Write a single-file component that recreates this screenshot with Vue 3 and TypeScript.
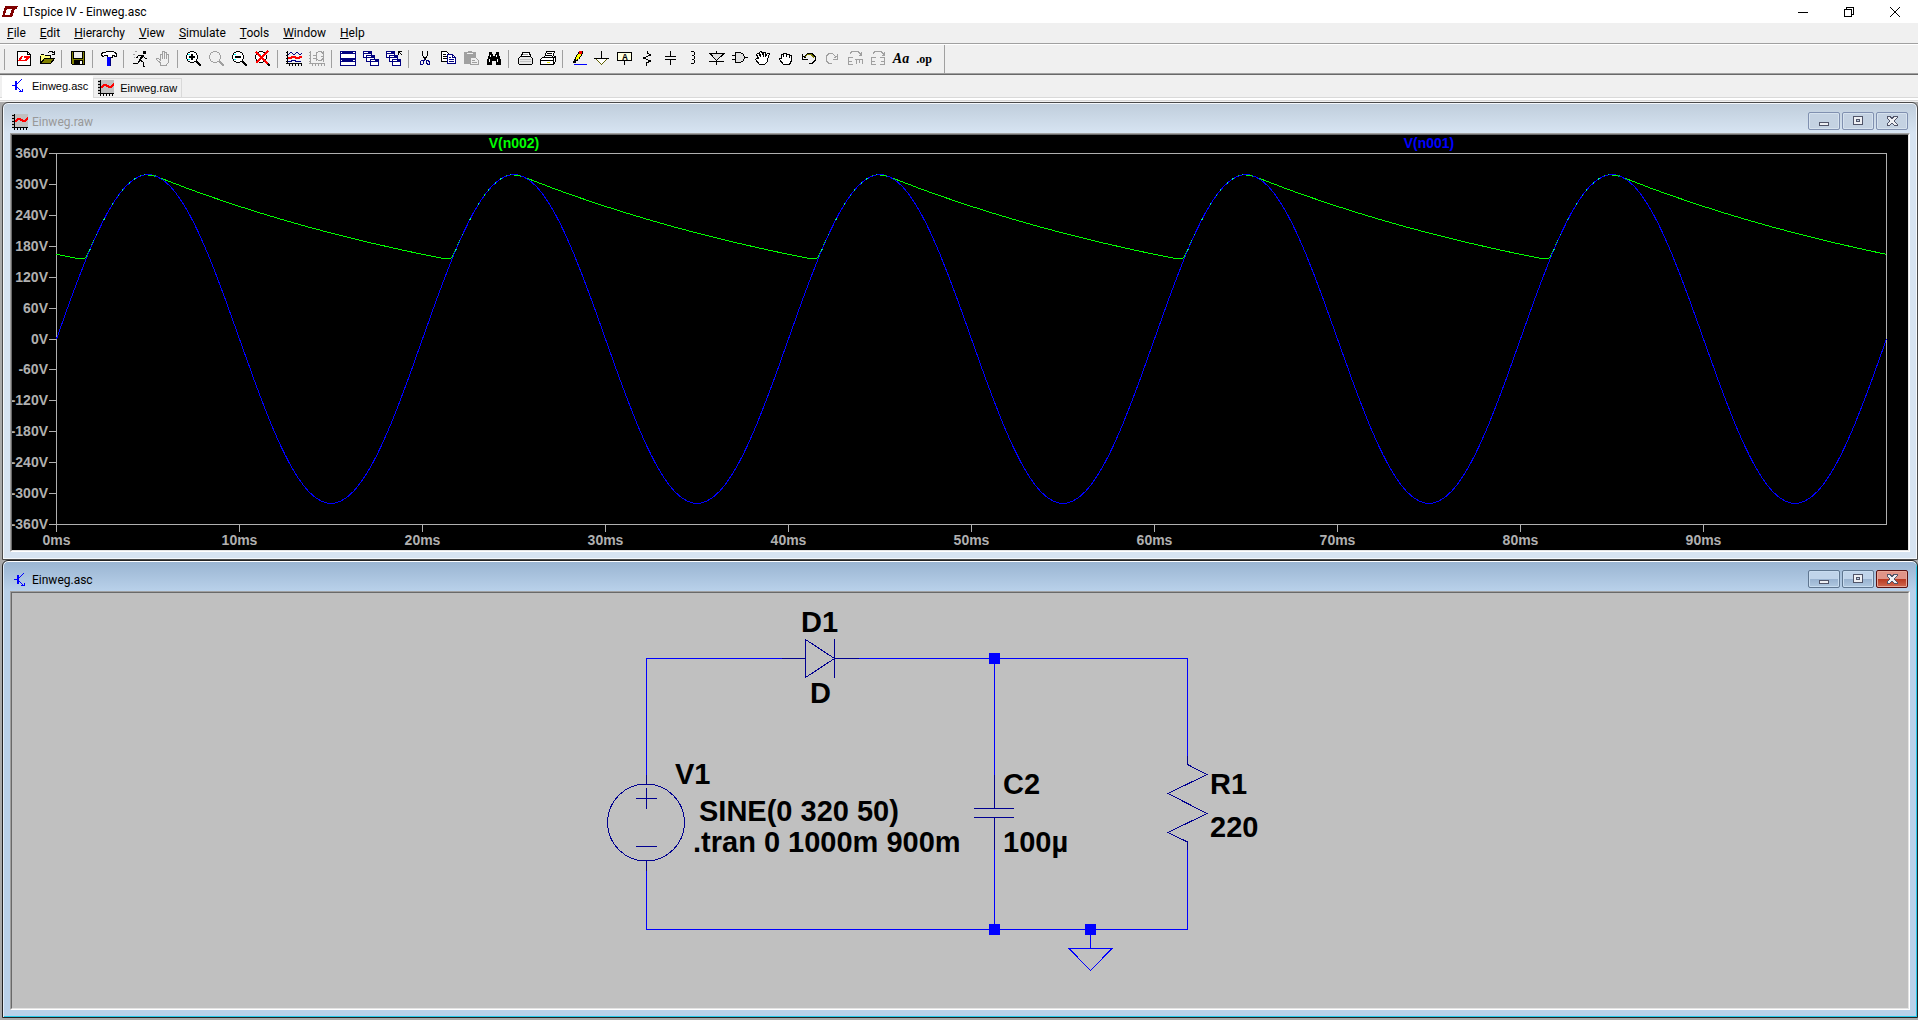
<script setup lang="ts">
import { computed, onBeforeUnmount, onMounted, ref } from 'vue'

interface MenuEntry { key: string; rest: string }
const menus: MenuEntry[] = ['File', 'Edit', 'Hierarchy', 'View', 'Simulate', 'Tools', 'Window', 'Help'].map(
  (m) => ({ key: m[0], rest: m.slice(1) }),
)

interface Shape { d: string; s?: string; f?: string; w?: number }
interface Tool { name: string; shapes: Shape[]; text?: string; cls?: string }

const K = '#000'
const N = '#000080'
const G = '#a0a0a0'
const lensShapes = (c: string): Shape[] => [
  { d: 'M4 1h4v1h2v2h1v4h-1v2H8v1H4v-1H2V8H1V4h1V2h2z', s: 'none', f: c === K ? '#fff' : 'none' },
  { d: 'M4 .5h4M2 1.5h2M8 1.5h2M1.5 2v2M10.5 2v2M.5 4v4M11.5 4v4M1.5 8v2M10.5 8v2M2 10.5h2M8 10.5h2M4 11.5h4', s: c },
  { d: 'M10 10l5 5', s: c, w: 2 },
]
const cascade = (x: number, y: number): Shape[] => [
  { d: `M${x} ${y}h9v7h-9z`, s: 'none', f: N },
  { d: `M${x + 1} ${y + 3}h7v3h-7z`, s: 'none', f: '#fff' },
  { d: `M${x + 1} ${y + 1.5}h4`, s: '#fff' },
]
const graphAxes = 'M1.5 0v13M0 12.5h16M0 1.5h1M0 4.5h1M0 7.5h1M0 10.5h1M3.5 13v2M6.5 13v2M9.5 13v2M12.5 13v2M15.5 13v2'

const groups: Tool[][] = [
  [
    { name: 'New schematic', shapes: [
      { d: 'M1.5 .5h10l3 3v11h-13z', s: K, f: '#fff' }, { d: 'M11.5 .5v3h3', s: K },
      { d: 'M5 5h2L5 9h3v1H2zM8 5h6v2h-1l-2 3H8l2-3H8z', s: 'none', f: '#f00' } ] },
    { name: 'Open', shapes: [
      { d: 'M1 13V4h4l1 1h6v2H5z', s: 'none', f: '#ffff80' },
      { d: 'M1 12.5V4.5M2 3.5h3M5.5 4.5h6V7', s: K },
      { d: 'M1.5 12.5L5.5 7.5h10l-4 5z', s: K, f: '#808000' },
      { d: 'M8.5 2.5l2-2h3l1 2M15.5 0v3.5h-3', s: K } ] },
  ],
  [{ name: 'Save', shapes: [
      { d: 'M1.5 .5h13v13H2.500l-1-1z', s: K, f: '#808000' },
      { d: 'M4 1h8v6H4z', s: 'none', f: '#efefef' }, { d: 'M3.5 0v7.5h9V0', s: K },
      { d: 'M4 9h9v5H4z', s: 'none', f: K }, { d: 'M10 10h2v3h-2z', s: 'none', f: '#fff' } ] }],
  [{ name: 'Control panel', shapes: [
      { d: 'M.5 4.5v-2l2-1h2l1-1h6l3 1l1 2v2h-1l-2-1h-1v2h-5v-2h-3l-1 1z', s: K, f: '#fff' },
      { d: 'M6 6h4v9H6z', s: 'none', f: '#00f' }, { d: 'M9.5 6v9', s: N } ] }],
  [
    { name: 'Run', shapes: [
      { d: 'M11 0h3v3h-3z', s: 'none', f: K }, { d: 'M11 4L8 9', s: K, w: 2 },
      { d: 'M10 4.5H6.5L4.5 7M11 5l2 2h2M8 9l3 2v4h2M8 9l-2 3H1', s: K },
      { d: 'M1 3.5h2M3 .5h2M2 6.5h1', s: G } ] },
    { name: 'Halt', shapes: [{ d: 'M5.5 14v-2L1.5 8.5V7.5h2l2 2V3.5h2V8V.5h2V8V1.5h2V8V3.5h2V11l-2 3z', s: G }] },
  ],
  [
    { name: 'Zoom in', shapes: [...lensShapes(K), { d: 'M2 3.5h2M2 8.5h2', s: '#0ff' }, { d: 'M3 6h6M6 3v6', s: K, w: 2 }] },
    { name: 'Pan', shapes: lensShapes(G) },
    { name: 'Zoom out', shapes: [...lensShapes(K), { d: 'M2 3.5h2M2 8.5h2', s: '#0ff' }, { d: 'M3 6h6', s: K, w: 2 }] },
    { name: 'Zoom to fit', shapes: [...lensShapes(K), { d: 'M3 3.5h3M7 8.5h2', s: '#0ff' }, { d: 'M1 1l12 12M13 0L1 12', s: '#f00', w: 2 }] },
  ],
  [
    { name: 'Autorange', shapes: [
      { d: graphAxes, s: K }, { d: 'M2 4l3-3l3 3l3-3l3 3l2-2', s: N },
      { d: 'M2 7h3l1-1h3l1 1h3l1-1h2', s: '#f00', w: 2 }, { d: 'M2 10.5h3l1-1h3l1 1h5', s: N } ] },
    { name: 'Pick traces', shapes: [
      { d: graphAxes, s: G },
      { d: 'M4 4.5h3M4 7.5h3M7.5 1v9M8 1.5l2-1h2l2 2v5l-2 2h-2l-2-1M14.5 0v11M12 5.5h3', s: G } ] },
  ],
  [
    { name: 'Tile windows', shapes: [
      { d: 'M0 0h16v15H0z', s: 'none', f: N }, { d: 'M1 3h14v4H1zM1 11h14v3H1z', s: 'none', f: '#fff' }, { d: 'M1 1.5h1M13 1.5h2M1 9.5h1M13 9.5h2', s: '#fff' } ] },
    { name: 'Cascade windows', shapes: [...cascade(0, 0), ...cascade(3, 4), ...cascade(7, 8)] },
    { name: 'Close all windows', shapes: [...cascade(0, 0), ...cascade(3, 4), ...cascade(6, 8), { d: 'M12.5 4V.5H16M13 1l3 3', s: K }] },
  ],
  [
    { name: 'Cut', shapes: [
      { d: 'M5.5 0v4l3 5M10.5 0v4l-3 5', s: K },
      { d: 'M7.5 8v2M4.5 9.5h2v3l-1 1h-2v-3zM9.5 9.5h2l1 2v2h-2l-1-2z', s: N } ] },
    { name: 'Copy', shapes: [
      { d: 'M1.5 .5h5l2 2v8h-7z', s: K, f: '#fff' }, { d: 'M3 3.5h3M3 5.5h4M3 7.5h4', s: K },
      { d: 'M7.5 3.5h5l3 3v6h-8z', s: N, f: '#fff' }, { d: 'M12.5 3v3h3M9 6.5h2M9 8.5h5M9 10.5h5', s: N } ] },
    { name: 'Paste', shapes: [
      { d: 'M1 1h4V0h4v1h4v12H1z', s: 'none', f: G }, { d: 'M4 2.5h6', s: '#efefef' },
      { d: 'M7.5 6.5h5l3 3v4h-8z', s: G, f: '#efefef' }, { d: 'M9 9.5h3M9 11.5h5', s: G } ] },
    { name: 'Find', shapes: [
      { d: 'M3 1h3v2h1v2h2V3h1V1h3v3l2 5v5h-5v-4H6v4H1V9l2-5z', s: 'none', f: K }, { d: 'M4.5 4v2M3.5 8v3M10.5 4v2M11.5 8v3', s: '#fff' } ] },
  ],
  [
    { name: 'Print setup', shapes: [
      { d: 'M4.5 5.5l1-4h7l1 4', s: K, f: '#fff' }, { d: 'M1.5 7.5l2-2h10l2 2v5l-1 1h-12l-1-1z', s: K, f: '#e8e8e8' },
      { d: 'M3 8.5h11M3 10.5h11', s: '#c0c0c0' }, { d: 'M6 3.5h5', s: G } ] },
    { name: 'Print', shapes: [
      { d: 'M4.5 6.5l2-6h8l-2 6', s: K, f: '#fff' }, { d: 'M7 2.5h5M6 4.5h6', s: K },
      { d: 'M.5 8.5l2-2h11l2-1v5l-2 3h-13z', s: K, f: '#fff' }, { d: 'M1 9.5h13M13.5 7v6', s: K }, { d: 'M7 11.5h3', s: '#e8e800' } ] },
  ],
  [
    { name: 'Wire', shapes: [
      { d: 'M3.5 10.5l1-4l4-6h3v2l-4 6z', s: K, f: '#ffff00' }, { d: 'M8 0h3v3H8z', s: 'none', f: '#f00' }, { d: 'M2 10h3v2H2z', s: 'none', f: K }, { d: 'M3 13.5h13', s: '#00f' } ] },
    { name: 'Ground', shapes: [{ d: 'M7.5 0v7', s: K }, { d: 'M1.5 7.5h12l-6 6z', s: '#606000', f: '#fff' }, { d: 'M0 7.5h15', s: K }] },
    { name: 'Label net', text: 'A', cls: 'glyph-label', shapes: [{ d: 'M.5 1.5h14v8H.5z', s: K, f: '#ffffe0' }, { d: 'M7.5 10v4', s: K }] },
    { name: 'Resistor', shapes: [{ d: 'M7.5 0v2l3 2l-7 3l7 3l-4 2v3', s: K }] },
    { name: 'Capacitor', shapes: [{ d: 'M7.5 0v5M7.5 9v5', s: K }, { d: 'M2 5.5h11M2 8.5h11', s: K }] },
    { name: 'Inductor', shapes: [{ d: 'M4.5 .5h3l1 1v2l-1 1h-2h2l1 1v2l-1 1h-2h2l1 1v2l-1 1h-3', s: K }] },
    { name: 'Diode', shapes: [{ d: 'M1 2.5h14L7.5 9.5z', s: K, f: '#e0e0e0' }, { d: 'M0 10.5h15M7.5 0v2M7.5 10v4', s: K }] },
    { name: 'Component', shapes: [{ d: 'M3.5 1.5h5l3 2l1 3l-1 3l-3 2h-5z', s: K, f: '#e0e0e0' }, { d: 'M0 4.5h3M0 8.5h3M13 6.5h3', s: K }] },
    { name: 'Move', shapes: [
      { d: 'M4.5 13.5L.5 8.5l1-1h2L1.5 3.5l1-1h1l2 3l-1-4l1-1l2 1l1 4V1.5h2v4l2-3h2l-2 6v2l-3 3h-4z', s: K, f: '#fff' } ] },
    { name: 'Drag', shapes: [
      { d: 'M5.5 13.5l-4-5v-1h2v-4h2v-1h3v1h3v1h2v5l-2 4z', s: K, f: '#fff' }, { d: 'M5.5 3v3M8.5 3v3M11.5 4v3', s: K } ] },
    { name: 'Undo', shapes: [
      { d: 'M4 4.5l3-2h4l3 3v4l-3 3H8', s: K }, { d: 'M4 5.5l3-2h3l3 3', s: '#808000' }, { d: 'M1.5 3v5h5M2 5l3 2', s: K } ] },
    { name: 'Redo', shapes: [{ d: 'M11 4.5l-3-2H5l-3 3v4l3 3h3M13.5 3v5h-5M13 5l-3 2', s: G }] },
    { name: 'Rotate', shapes: [{ d: 'M3 2.5l2-2h6l3 3M14.5 1v3h-3M6 6.5H1.5v7H6M2 10.5h3M8 8.5h8M9.5 8v5M12.5 8v4M15.5 8v5', s: G }] },
    { name: 'Mirror', shapes: [{ d: 'M3 2.5l2-2h6l3 3M14.5 1v3h-3M6 6.5H1.5v7H6M2 10.5h3M10 6.5h4.5v7H10M14 10.5h-3', s: G }] },
    { name: 'Text', text: 'Aa', cls: 'glyph-text', shapes: [] },
    { name: 'SPICE directive', text: '.op', cls: 'glyph-op', shapes: [] },
  ],
]

/* Waveform pane: the drawing follows the measured size of its host. */
const host = ref<HTMLElement | null>(null)
const w = ref(1896)
const h = ref(415)
let ro: ResizeObserver | undefined
onMounted(() => {
  if (!host.value) return
  ro = new ResizeObserver((entries) => {
    w.value = Math.round(entries[0].contentRect.width)
    h.value = Math.round(entries[0].contentRect.height)
  })
  ro.observe(host.value)
})
onBeforeUnmount(() => ro?.disconnect())

const left = 44.5
const top = 18.5
const right = computed(() => w.value - 21.5)
const bottom = computed(() => h.value - 25.5)
const X = (ms: number) => left + ((right.value - left) * ms) / 100
const Y = (v: number) => top + ((bottom.value - top) * (360 - v)) / 720

const yTicks = computed(() =>
  Array.from({ length: 13 }, (_, i) => 360 - i * 60).map((v) => ({ label: `${v}V`, y: Math.floor(Y(v)) + 0.5 })),
)
const xTicks = computed(() =>
  Array.from({ length: 10 }, (_, i) => ({ label: `${i * 10}ms`, x: Math.floor(X(i * 10)) + 0.5 })),
)

const sine = (ms: number) => 319 * Math.sin((2 * Math.PI * ms) / 20)
const output = (ms: number) => {
  const t = ms % 20
  const a = 315.5 * Math.exp(-((t < 5.4 ? t + 20 : t) - 5.46) / 22.3)
  if (t >= 5.4) return a
  const b = sine(t)
  if (t >= 3) return b
  return (a + b) / 2 + Math.sqrt(((a - b) / 2) ** 2 + 30 * Math.max(0, 1 - Math.abs(t - 1.6)))
}
const trace = (fn: (ms: number) => number, from: number, to: number, step: number) => {
  const pts: string[] = []
  for (let t = from; t <= to + 1e-6; t += step) pts.push(`${X(t).toFixed(1)},${Y(fn(t)).toFixed(1)}`)
  return pts.join(' ')
}
const sinePoints = computed(() => trace(sine, 0, 100, 0.25))
const outPoints = computed(() => trace(output, 0, 100, 0.1))
const overlaps = computed(() => [0, 20, 40, 60, 80].map((o) => trace(sine, o + 1.8, o + 5, 0.1)))
const peaks = computed(() => [0, 20, 40, 60, 80].map((o) => trace((t) => sine(t) - 1, o + 5, o + 5.4, 0.1)))
</script>

<template>
  <div class="app">
    <header class="titlebar">
      <svg class="logo" width="16" height="12" viewBox="0 0 16 12">
        <path d="M3 0h3L3 9h4l-1 2H0zM6 0h10l-1 3h-2l-3 8H5l1-2h2l2-6H5z" fill="#800000" />
      </svg>
      <span class="caption">LTspice IV - Einweg.asc</span>
      <div class="sysbuttons">
        <button aria-label="Minimize"><svg width="12" height="12"><path d="M1 6.5h10" /></svg></button>
        <button aria-label="Restore"><svg width="12" height="12"><path d="M1.5 3.5h7v7h-7zM3.5 3v-1.5h7v7h-2" /></svg></button>
        <button aria-label="Close"><svg width="12" height="12" class="smooth"><path d="M1 1l10 10M11 1L1 11" /></svg></button>
      </div>
    </header>

    <nav class="menubar">
      <button v-for="m in menus" :key="m.rest"><u>{{ m.key }}</u>{{ m.rest }}</button>
    </nav>

    <div class="toolbar" role="toolbar">
      <template v-for="(g, gi) in groups" :key="gi">
        <span v-if="gi" class="sep"></span>
        <button v-for="t in g" :key="t.name" class="tool" :aria-label="t.name">
          <svg width="16" height="16" viewBox="0 0 16 16">
            <path v-for="(p, i) in t.shapes" :key="i" :d="p.d" :stroke="p.s" :fill="p.f ?? 'none'" :stroke-width="p.w ?? 1" />
            <text v-if="t.text" x="8" :y="t.cls === 'glyph-label' ? 9 : 12" text-anchor="middle" :class="t.cls">{{ t.text }}</text>
          </svg>
        </button>
      </template>
      <span class="toolbar-end"></span>
    </div>

    <div class="tabs">
      <button class="tab active">
        <svg width="16" height="16" viewBox="0 0 16 16" class="transistor"><path d="M2 7.5h3M7 6l5-5M7 9l5 5M9 13.5h3.5V10.5" /><path d="M6 3v9" class="bar" /></svg>
        <span>Einweg.asc</span>
      </button>
      <button class="tab">
        <svg width="16" height="16" viewBox="0 0 16 16" class="wave">
          <path d="M0 0h16v14H0z" class="bg" /><path d="M2.5 0v16M0 13.5h16M0 1.5h2M0 4.5h2M0 7.5h2M0 10.5h2M5.5 14v2M8.5 14v2M11.5 14v2M14.5 14v2" class="ax" /><path d="M3 8l3-3h2l3 2h2l3-3" class="cv" />
        </svg>
        <span>Einweg.raw</span>
      </button>
    </div>

    <main class="mdi">
      <section class="child">
        <div class="child-title">
          <svg width="16" height="16" viewBox="0 0 16 16" class="wave">
            <path d="M0 0h16v14H0z" class="bg" /><path d="M2.5 0v16M0 13.5h16M0 1.5h2M0 4.5h2M0 7.5h2M0 10.5h2M5.5 14v2M8.5 14v2M11.5 14v2M14.5 14v2" class="ax" /><path d="M3 8l3-3h2l3 2h2l3-3" class="cv" />
          </svg>
          <span class="caption">Einweg.raw</span>
          <div class="winbuttons">
            <button aria-label="Minimize"><svg width="12" height="12"><path d="M1.5 7.5h9v3h-9z" /></svg></button>
            <button aria-label="Maximize"><svg width="12" height="12"><path d="M1.5 1.5h9v8h-9zM4.5 4.5h3v2h-3z" fill-rule="evenodd" /></svg></button>
            <button aria-label="Close"><svg width="12" height="12"><path d="M1 1.5h3l2 2l2-2h3v1.5l-3 3l3 3v1h-3l-2-2l-2 2H1v-1l3-3l-3-3z" /></svg></button>
          </div>
        </div>
        <div class="frame">
          <div ref="host" class="plot">
            <svg :width="w" :height="h">
              <g class="axis">
                <path :d="`M${left} ${top}H${right}V${bottom}H${left}z`" />
                <path v-for="t in yTicks" :key="t.label" :d="`M37 ${t.y}H44`" />
                <path v-for="t in xTicks" :key="t.label" :d="`M${t.x} ${bottom}v7`" />
              </g>
              <polyline :points="outPoints" class="out" />
              <polyline :points="sinePoints" class="sin" />
              <polyline v-for="(o, i) in overlaps" :key="`o${i}`" :points="o" class="both" />
              <polyline v-for="(p, i) in peaks" :key="`p${i}`" :points="p" class="out" />
              <text v-for="t in yTicks" :key="t.label" x="36" :y="t.y + 4.5" text-anchor="end">{{ t.label }}</text>
              <text v-for="t in xTicks" :key="t.label" :x="t.x" :y="bottom + 20" text-anchor="middle">{{ t.label }}</text>
              <text :x="X(25)" y="13" text-anchor="middle" class="t-out">V(n002)</text>
              <text :x="X(75)" y="13" text-anchor="middle" class="t-sin">V(n001)</text>
            </svg>
          </div>
        </div>
      </section>

      <section class="child current">
        <div class="child-title">
          <svg width="16" height="16" viewBox="0 0 16 16" class="transistor"><path d="M2 7.5h3M7 6l5-5M7 9l5 5M9 13.5h3.5V10.5" /><path d="M6 3v9" class="bar" /></svg>
          <span class="caption">Einweg.asc</span>
          <div class="winbuttons">
            <button aria-label="Minimize"><svg width="12" height="12"><path d="M1.5 7.5h9v3h-9z" /></svg></button>
            <button aria-label="Maximize"><svg width="12" height="12"><path d="M1.5 1.5h9v8h-9zM4.5 4.5h3v2h-3z" fill-rule="evenodd" /></svg></button>
            <button aria-label="Close" class="red"><svg width="12" height="12"><path d="M1 1.5h3l2 2l2-2h3v1.5l-3 3l3 3v1h-3l-2-2l-2 2H1v-1l3-3l-3-3z" /></svg></button>
          </div>
        </div>
        <div class="frame">
          <div class="sheet">
            <svg width="720" height="415" viewBox="600 593 720 415">
              <path class="wire" d="M646.5 775V658.5H782M859 658.5H1187.5V756M1187.5 850V929.5H646.5V871M994.5 658V775M994.5 850V929M1090.5 929V948.5M1069 948.5H1112L1090.5 970.5z" />
              <path class="part" d="M646.5 775V784M646.5 860V871M636 798.5H657M646.5 788V809M636 846.5H657M782 658.5H805M834 658.5H859M805.5 639.5V677.5L834.5 658.5zM834.5 639V678M994.5 775V808M974 808.5H1014M974 817.5H1014M994.5 817V850M1187.5 756V764.5L1207 774.5L1168 793.5L1207 813.5L1168 832.5L1187.5 842V850" />
              <circle class="part" cx="646" cy="822.5" r="38.5" />
              <path class="node" d="M989 653h11v11h-11zM989 924h11v11h-11zM1085 924h11v11h-11z" />
              <text x="801" y="632">D1</text>
              <text x="810" y="703">D</text>
              <text x="675" y="784">V1</text>
              <text x="699" y="821">SINE(0 320 50)</text>
              <text x="693" y="852">.tran 0 1000m 900m</text>
              <text x="1003" y="794">C2</text>
              <text x="1003" y="852">100µ</text>
              <text x="1210" y="794">R1</text>
              <text x="1210" y="837">220</text>
            </svg>
          </div>
        </div>
      </section>
    </main>
  </div>
</template>

<style>
body { margin: 0; background: #f0f0f0; }
</style>

<style scoped>
.app {
  display: flex;
  flex-direction: column;
  height: 100vh;
  overflow: hidden;
  background: #f0f0f0;
  color: #000;
  font: 12px/16px Roboto, "Open Sans", sans-serif;
}
button {
  margin: 0;
  padding: 0;
  border: 0;
  background: none;
  color: inherit;
  font: inherit;
}
svg { display: block; flex: none; shape-rendering: crispEdges; }
.smooth { shape-rendering: auto; }

.titlebar { display: flex; align-items: center; flex: none; height: 23px; padding-left: 2px; background: #fff; }
.titlebar .caption { margin-left: 5px; }
.sysbuttons { display: flex; margin-left: auto; }
.sysbuttons button { display: flex; align-items: center; justify-content: center; width: 46px; height: 20px; }
.sysbuttons path { fill: none; stroke: #000; }

.menubar { display: flex; flex: none; height: 20px; border-bottom: 1px solid #a0a0a0; box-shadow: 0 1px #fff; }
.menubar button { padding: 0 7px; white-space: nowrap; }

.toolbar {
  display: flex;
  align-items: center;
  flex: none;
  height: 28px;
  margin-top: 1px;
  border-bottom: 1px solid #a0a0a0;
  box-shadow: 0 1px #696969;
}
.toolbar::before { content: ""; width: 1px; height: 21px; margin: 0 8px 0 4px; background: #a0a0a0; }
.tool { display: flex; width: 23px; height: 16px; padding-left: 3px; box-sizing: border-box; }
.tool svg { overflow: visible; }
.sep { width: 1px; height: 18px; margin: 0 5px 0 2px; background: #a0a0a0; }
.toolbar-end { width: 1px; height: 28px; margin-left: 8px; background: #a0a0a0; }
.glyph-text { font: italic bold 14px "Liberation Serif", serif; }
.glyph-op { font: bold 12px "Liberation Serif", serif; }
.glyph-label { font: bold 9px "Liberation Mono", monospace; }

.tabs {
  display: flex;
  align-items: flex-start;
  flex: none;
  height: 21px;
  margin-top: 1px;
  padding: 1px 2px 0;
  border-bottom: 1px solid #d9d9d9;
  box-shadow: 0 2px #fff, 0 3px #d9d9d9;
  font: 11px/14px "Liberation Sans", sans-serif;
}
.tab { display: flex; align-items: center; gap: 6px; height: 19px; margin-top: 2px; padding: 0 4px; border: 1px solid #d9d9d9; border-bottom: 0; }
.tab.active { height: 22px; margin: 0; padding: 0 4px 4px 7px; border-color: #fff; background: #fff; z-index: 1; }

.transistor path { fill: none; stroke: #00f; }
.transistor .bar { stroke-width: 2; }
.wave .bg { fill: #c0c0c0; }
.wave .ax { fill: none; stroke: #000; }
.wave .cv { fill: none; stroke: #f00; stroke-width: 2; }

.mdi {
  display: grid;
  grid-template-rows: 1fr 1fr;
  flex: 1;
  min-height: 0;
  margin-top: 4px;
  padding: 0 0 2px 2px;
  background: #a9a9a9;
}
.child {
  display: flex;
  flex-direction: column;
  min-height: 0;
  padding: 0 7px 7px;
  border: 1px solid #4a4a4a;
  border-radius: 6px 6px 0 0;
  background: linear-gradient(#bfcddb, #d7e4f2 30px);
  box-shadow: inset 0 0 0 1px #f4f8fc;
  color: #999;
}
.child.current {
  border-color: #222;
  background: linear-gradient(#99b4d1, #b9d1ea 30px);
  box-shadow: inset 0 1px #fff, inset 1px 0 #e0ecf8, inset -1px -1px #27c8e8;
  color: #000;
}
.child-title { display: flex; align-items: flex-end; flex: none; height: 27px; padding: 0 2px 3px; }
.child-title .caption { margin: 0 auto 0 4px; }
.winbuttons { display: flex; gap: 2px; }
.winbuttons button {
  display: flex;
  align-items: center;
  justify-content: center;
  width: 32px;
  height: 18px;
  border: 1px solid #8090b0;
  border-radius: 2px;
  background: #c4d2e2;
  box-shadow: inset 0 0 0 1px #d6e2ee;
}
.winbuttons path { fill: #eef0f4; stroke: #505468; }
.current .winbuttons button { border-color: #5f7690; background: linear-gradient(#c0d4ea 50%, #98b2d0 50%, #b0c8e0); box-shadow: inset 0 0 0 1px #c8dcf0; }
.current .winbuttons .red { border-color: #5a1010; background: linear-gradient(#e09488 50%, #b83820 50%, #d06850); box-shadow: inset 0 0 0 1px #e8a898; }
.frame { display: flex; flex: 1; min-height: 0; border: 1px solid; border-color: #a0a0a0 #fff #fff #a0a0a0; }
.plot, .sheet { flex: 1; min-width: 0; overflow: hidden; border: 1px solid; border-color: #696969 #e3e3e3 #e3e3e3 #696969; }

.plot { background: #000; }
.plot text { fill: #b0b0b0; font: bold 14px "Liberation Sans", sans-serif; }
.plot .t-out { fill: #0f0; }
.plot .t-sin { fill: #00f; }
.axis path, .plot polyline { fill: none; stroke: #b0b0b0; }
.plot .out { stroke: #0f0; }
.plot .sin { stroke: #00f; }
.plot .both { stroke: #00e0a0; stroke-dasharray: 2 9 1 5; }

.sheet { display: flex; align-items: center; justify-content: center; background: #c0c0c0; }
.sheet text { fill: #000; font: bold 29px "Liberation Sans", sans-serif; }
.wire { fill: none; stroke: #00f; }
.part { fill: none; stroke: #000090; }
.node { fill: #00f; }
</style>
